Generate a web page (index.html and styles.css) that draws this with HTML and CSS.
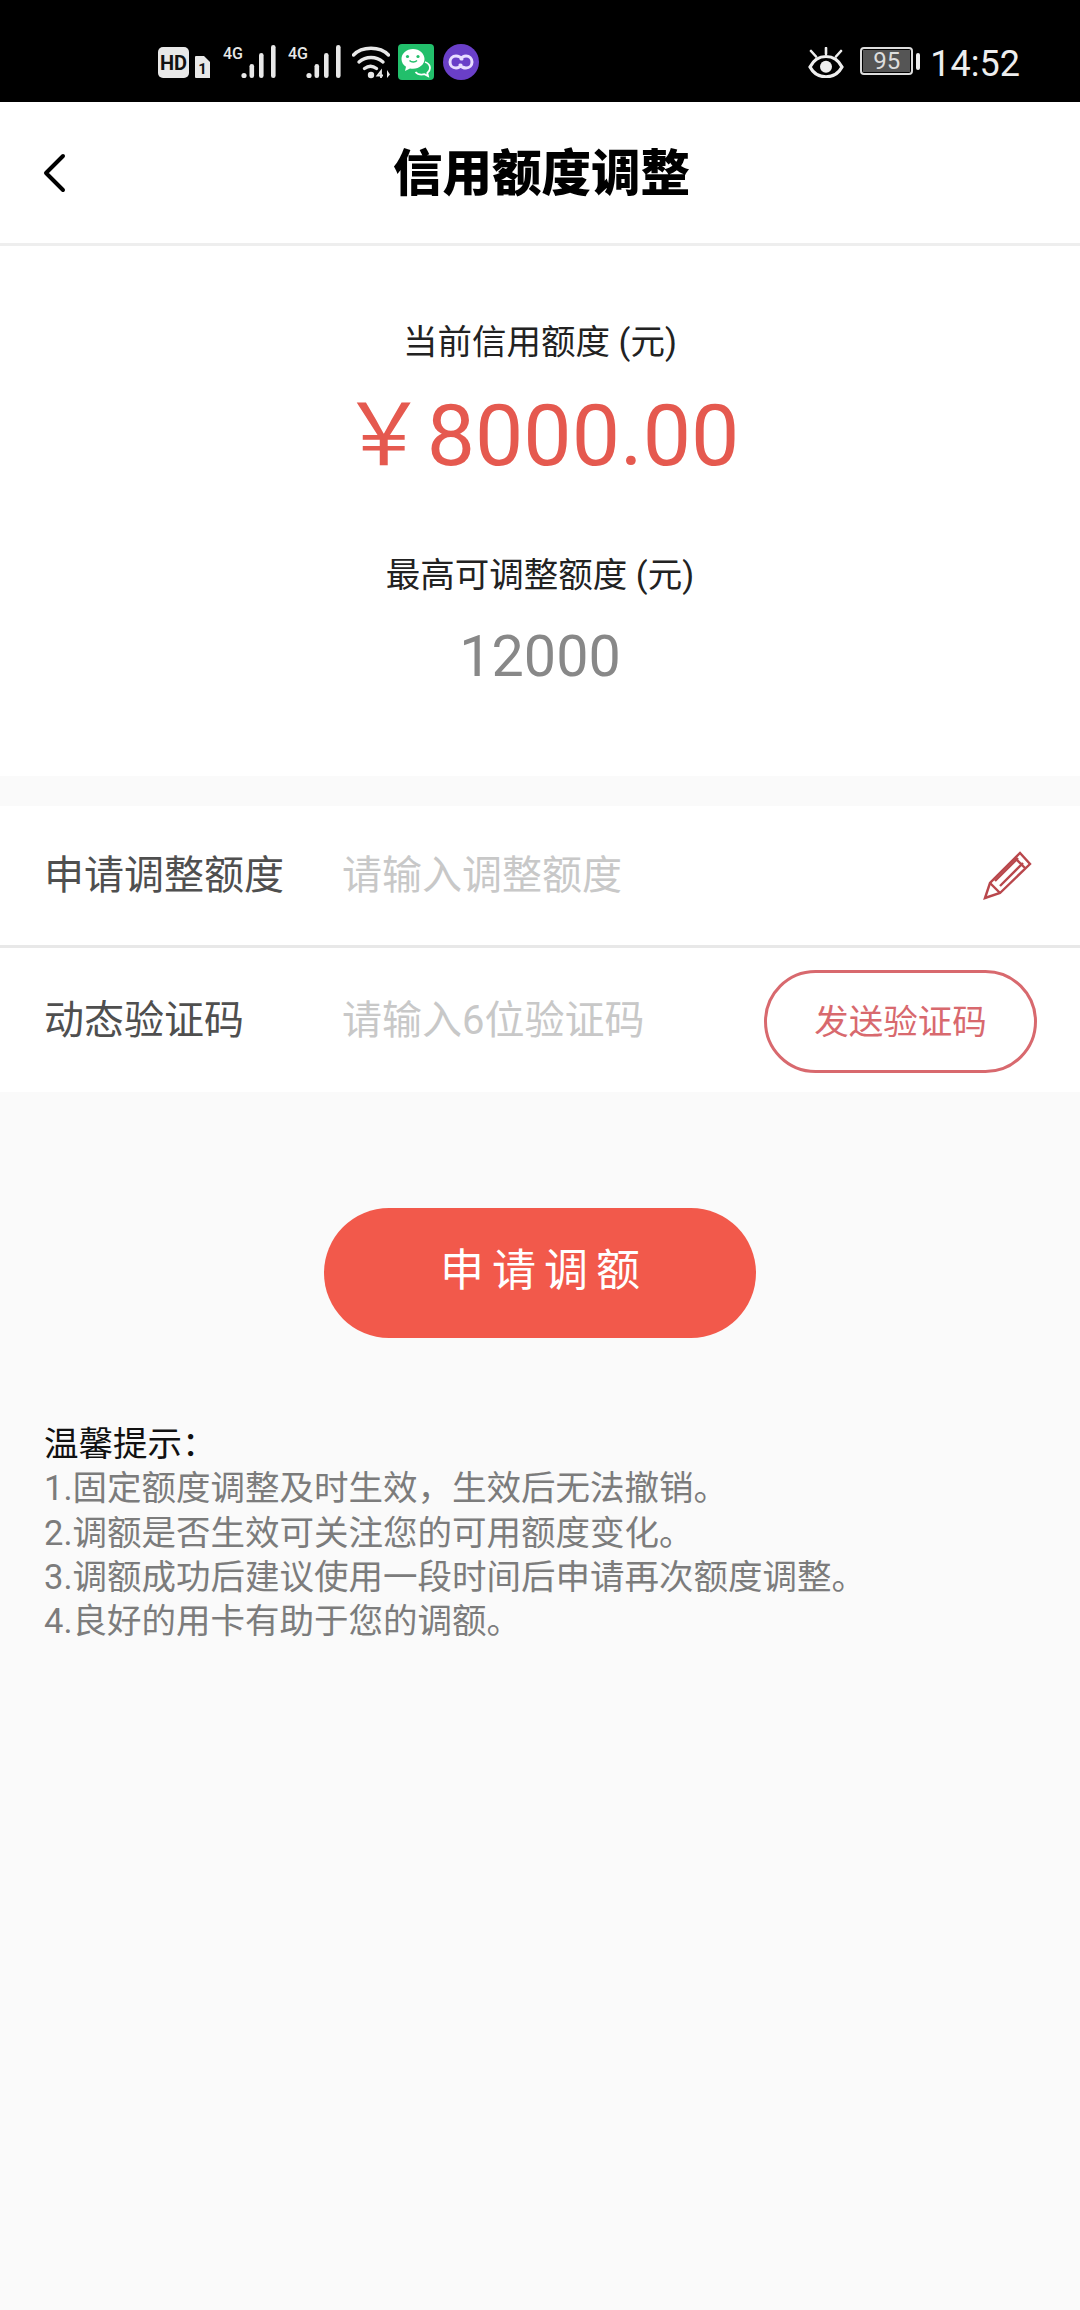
FILE: index.html
```html
<!DOCTYPE html>
<html lang="zh">
<head>
<meta charset="utf-8">
<title>信用额度调整</title>
<link rel="stylesheet" href="styles.css">
</head>
<body>
<div class="status">
  <div class="status-left">
    <svg width="55" height="36" viewBox="0 0 55 36"><rect x="1" y="3" width="31" height="31" rx="5" fill="#e8e8e8"/><text x="16.500" y="25.500" text-anchor="middle" class="hd-t">HD</text><path d="M39 12h8l6 6v16H39a1 1 0 0 1-1-1V13a1 1 0 0 1 1-1z" fill="#e8e8e8"/><text x="45.500" y="30" text-anchor="middle" class="sim-t">1</text></svg>
    <svg width="54" height="36" viewBox="0 0 54 36"><text x="0" y="15" class="sig-t">4G</text><g fill="#e8e8e8"><circle cx="21" cy="31.500" r="2.600"/><rect x="26.500" y="20" width="4.600" height="14" rx="2.300"/><rect x="36" y="9" width="4.600" height="25" rx="2.300"/><rect x="48" y="1" width="4.600" height="33" rx="2.300"/></g></svg>
    <svg width="54" height="36" viewBox="0 0 54 36"><text x="0" y="15" class="sig-t">4G</text><g fill="#e8e8e8"><circle cx="21" cy="31.500" r="2.600"/><rect x="26.500" y="20" width="4.600" height="14" rx="2.300"/><rect x="36" y="9" width="4.600" height="25" rx="2.300"/><rect x="48" y="1" width="4.600" height="33" rx="2.300"/></g></svg>
    <svg class="wifi" width="38" height="36" viewBox="0 0 38 36"><g fill="none" stroke="#e8e8e8" stroke-width="3.400" stroke-linecap="round"><path d="M1.500 11C10 2 28 2 36.500 11"/><path d="M7 18c7-6 17-6 24 0"/><path d="M12.500 24.500c4-3 8-3 12 0"/></g><circle cx="19" cy="31" r="3.200" fill="#e8e8e8"/><path d="M29 34v-7l-3.500 4.500H31" fill="none" stroke="#e8e8e8" stroke-width="1.800"/><path d="M35 26v8l3-3.500z" fill="#e8e8e8"/></svg>
    <svg class="chat" width="36" height="36" viewBox="0 0 36 36"><rect width="36" height="36" rx="4" fill="#22bf6b"/><path d="M15 5C8.500 5 3.500 9.500 3.500 15c0 3.200 1.700 6 4.500 7.800L7 27l5-2.600c1 .2 2 .3 3 .3 6.500 0 11.500-4.400 11.500-9.700S21.500 5 15 5z" fill="#fff"/><path d="M27 18c3 1 5 3.200 5 6 0 2-1 3.700-2.700 5l.7 3-3.500-1.800c-1 .3-2 .4-3 .4-2.500 0-4.700-1-6-2.600" fill="none" stroke="#fff" stroke-width="1.800"/><circle cx="9.500" cy="12.500" r="1.600" fill="#22bf6b"/><circle cx="20" cy="12.500" r="1.600" fill="#22bf6b"/><path d="M11.500 16.500c2 2 5.500 2 7.500 0" stroke="#22bf6b" stroke-width="1.500" fill="none"/></svg>
    <svg class="loop" width="36" height="36" viewBox="0 0 36 36"><circle cx="18" cy="18" r="18" fill="#6a3fc8"/><path d="M19 15c-1.500-2-3.500-3-6-3-3.500 0-6 2.500-6 6s2.500 6 6 6c2.300 0 4-1 5-3M17 21c1.500 2 3.500 3 6 3 3.500 0 6-2.500 6-6s-2.500-6-6-6c-2.300 0-4 1-5 3" fill="none" stroke="#e8ddff" stroke-width="3" stroke-linecap="round"/></svg>
  </div>
  <div class="status-right">
    <svg class="eye" width="36" height="31" viewBox="0 0 36 31"><path d="M2 20C9 6 27 6 34 20 27 33 9 33 2 20z" fill="none" stroke="#eee" stroke-width="3.200"/><circle cx="18" cy="19.700" r="6" fill="#eee"/><path d="M3 4l5 5.500M18 1v6M33 4l-5 5.500" stroke="#eee" stroke-width="2.600" stroke-linecap="round"/></svg>
    <div class="batt"><div class="batt-box"><span class="batt-num">95</span></div><span class="batt-cap"></span></div>
    <span class="clock">14:52</span>
  </div>
</div>

<header class="nav">
  <svg class="back" width="24" height="40" viewBox="0 0 24 40"><path d="M21 3L4 20l17 17" fill="none" stroke="#000" stroke-width="4" stroke-linecap="round" stroke-linejoin="round"/></svg>
  <h1 class="title">信用额度调整</h1>
</header>

<section class="summary">
  <p class="label">当前信用额度 (元)</p>
  <p class="amount">￥8000.00</p>
  <p class="label label-max">最高可调整额度 (元)</p>
  <p class="max">12000</p>
</section>

<section class="form">
  <div class="row row-line">
    <span class="row-label">申请调整额度</span>
    <span class="ph">请输入调整额度</span>
    <svg class="pencil" width="50" height="50" viewBox="0 0 50 50"><g fill="none" stroke="#b9474c" stroke-width="2.400"><path d="M2 48l5-15L37 3l10 11-30 29z"/><path d="M7 33l10 10"/><path d="M12 31L35 8M17 36L40 13M32 8l10 10"/></g></svg>
  </div>
  <div class="row row-code">
    <span class="row-label">动态验证码</span>
    <span class="ph">请输入6位验证码</span>
    <button class="send">发送验证码</button>
  </div>
</section>

<div class="action"><button class="submit">申请调额</button></div>

<section class="tips">
  <p class="tips-head">温馨提示：</p>
  <p>1.固定额度调整及时生效，生效后无法撤销。</p>
  <p>2.调额是否生效可关注您的可用额度变化。</p>
  <p>3.调额成功后建议使用一段时间后申请再次额度调整。</p>
  <p>4.良好的用卡有助于您的调额。</p>
</section>
</body>
</html>
```
FILE: styles.css
```css
* { box-sizing: border-box; }
html, body { margin: 0; padding: 0; }
body {
  width: 1080px;
  height: 2310px;
  background: #fafafa;
  font-family: Roboto, "Noto Sans CJK SC", sans-serif;
  overflow: hidden;
}
p, h1 { margin: 0; font-weight: normal; }

.status {
  height: 102px;
  background: #000;
  display: flex;
  justify-content: space-between;
  align-items: flex-start;
  padding: 44px 60px 0 157px;
}
.status-left { display: flex; align-items: flex-start; gap: 11px; }
.wifi { margin-left: -1px; }
.chat { margin-left: -3px; }
.loop { margin-left: -2px; }
.hd-t { font: 700 20px Roboto, sans-serif; fill: #111; }
.sim-t { font: 700 15px Roboto, sans-serif; fill: #111; }
.sig-t { font: 500 16px "Liberation Sans Narrow", Roboto, sans-serif; fill: #e8e8e8; }
.status-right { display: flex; align-items: flex-start; }
.eye { margin: 3px 16px 0 0; }
.batt { display: flex; align-items: center; gap: 3px; margin: 3px 10px 0 0; }
.batt-box {
  width: 53px; height: 28px;
  border: 2px solid #ddd; border-radius: 4px;
  padding: 1px;
  display: flex;
}
.batt-num {
  flex: 1;
  background: #555;
  color: #ddd;
  font-size: 24px;
  line-height: 22px;
  text-align: center;
}
.batt-cap { width: 4px; height: 17px; background: #eee; border-radius: 2px; }
.clock { color: #eee; font-size: 36px; line-height: 40px; }

.nav {
  height: 144px;
  background: #fff;
  border-bottom: 3px solid #eee;
  display: flex;
  align-items: center;
  justify-content: center;
  padding: 0 0 6px 3px;
  position: relative;
}
.back { position: absolute; left: 42px; top: 51px; }
.title { font-size: 49.500px; font-weight: 900; color: #000; }

.summary {
  height: 530px;
  background: #fff;
  padding-top: 74px;
  text-align: center;
  margin-bottom: 30px;
}
.label { font-size: 34.500px; line-height: 44px; color: #222; }
.amount { font-size: 86px; line-height: 100px; color: #e5594f; margin-top: 22px; }
.label-max { margin-top: 67px; }
.max { font-size: 57.500px; line-height: 70px; color: #888; margin-top: 25px; }

.form { background: #fff; }
.row { height: 144px; display: flex; align-items: center; padding: 0 44px 8px; position: relative; }
.row-line { height: 142px; border-bottom: 3px solid #e8e8e8; }
.row-code { padding-bottom: 6px; }
.row-label { width: 298px; font-size: 40px; color: #4f4f4f; }
.ph { font-size: 40px; color: #c8c8c8; flex: 1; }
.pencil { position: absolute; right: 47px; top: 44px; }
.send {
  position: absolute; right: 43px; top: 22px;
  width: 273px; height: 103px;
  border: 3px solid #d8696e;
  border-radius: 52px;
  background: #fff;
  color: #d8696e;
  font: 34.500px Roboto, "Noto Sans CJK SC", sans-serif;
  padding: 0 0 5px;
}

.action { display: flex; justify-content: center; padding-top: 116px; }
.submit {
  width: 432px; height: 130px;
  border: 0; border-radius: 65px;
  background: #f2594b;
  color: #fff;
  font: 44px Roboto, "Noto Sans CJK SC", sans-serif;
  letter-spacing: 8px;
  padding: 0 0 12px 8px;
}

.tips { padding: 84px 44px 0; font-size: 34.500px; line-height: 44.300px; color: #7c7c7c; }
.tips-head { color: #111; }
```
